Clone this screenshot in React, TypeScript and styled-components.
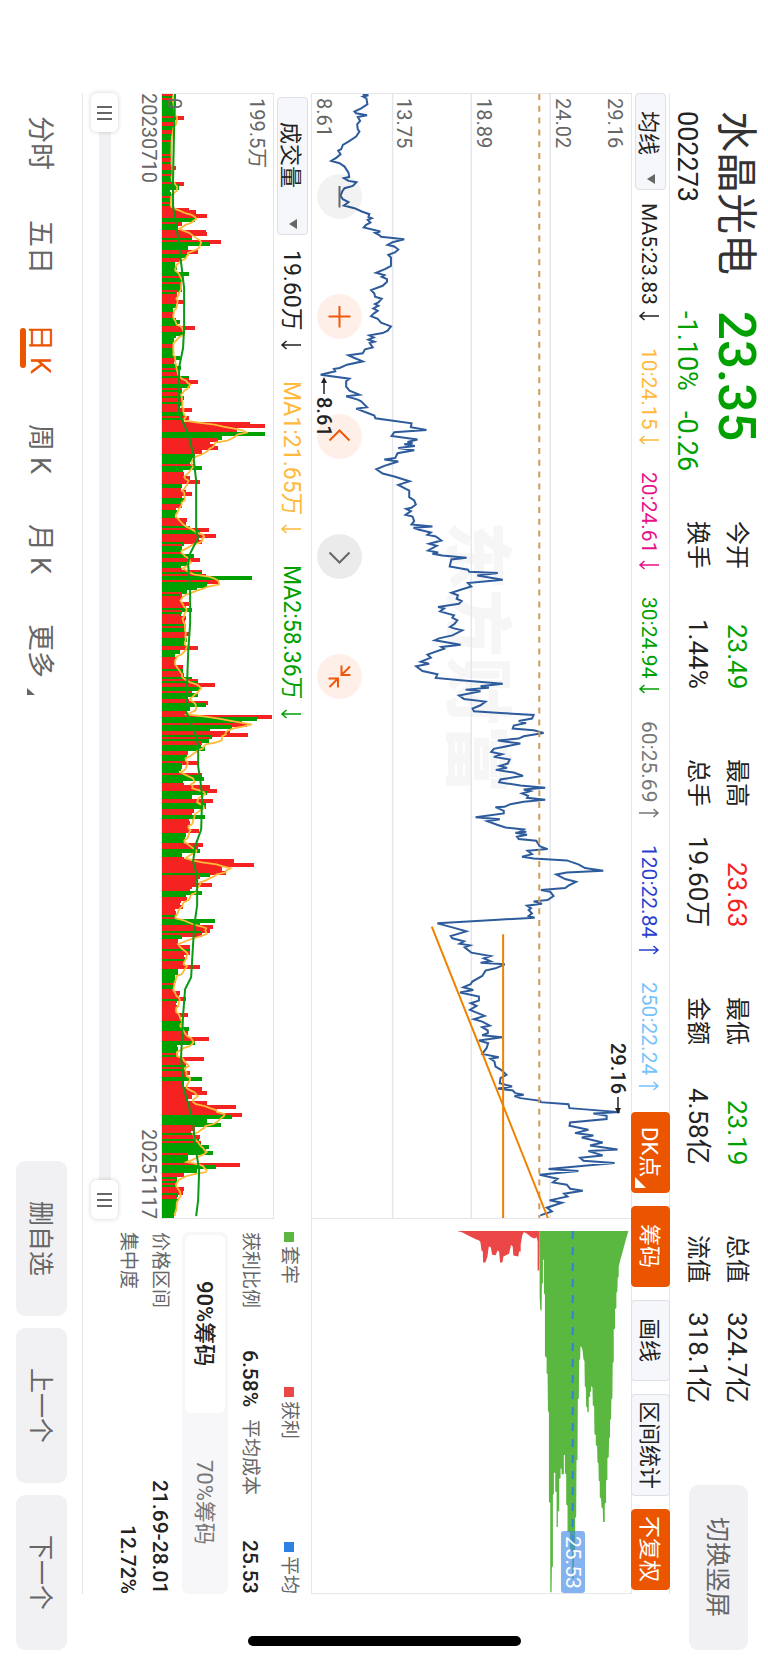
import React, { useState } from "react";
import styled, { createGlobalStyle, css } from "styled-components";

const GlobalStyle = createGlobalStyle`
  * { box-sizing: border-box; }
  html, body { margin: 0; padding: 0; background: #fff; }
  button, select, input {
    font: inherit;
    color: inherit;
    margin: 0;
    padding: 0;
    border: 0;
    background: none;
    writing-mode: vertical-rl;
    text-orientation: sideways;
  }
  dl, dd, dt, p, h1, ul { margin: 0; padding: 0; font-weight: 400; }
`;

const UP = "#f52222";
const DOWN = "#00a000";
const ORANGE = "#eb5500";
const LINE = "#e4e6ec";

/* The trading screen is a landscape one: lines run down the window. */
const Screen = styled.div`
  position: relative;
  display: flex;
  flex-direction: column;
  width: 100%;
  height: 100vh;
  min-height: 1500px;
  padding-inline: 93px 13px;
  writing-mode: vertical-rl;
  text-orientation: sideways;
  background: #fff;
  color: #222;
  font-family: Roboto, "Noto Sans CJK SC", sans-serif;
  font-size: 22px;
  line-height: 24px;
  white-space: nowrap;
`;

/* ---------- header ---------- */

const Header = styled.header`
  display: flex;
  flex: none;
  block-size: 98px;
`;

const Quote = styled.section`
  display: grid;
  grid-template-columns: 200px 210px;
  grid-template-rows: 60px 38px;
  padding-block-start: 2px;
  padding-inline-start: 18px;
`;

const StockName = styled.h1`
  font-size: 41px;
  line-height: 60px;
  color: #333;
`;

const LastPrice = styled.p`
  font-size: 51px;
  font-weight: 500;
  line-height: 60px;
  color: ${DOWN};
`;

const Code = styled.p`
  font-size: 27px;
  line-height: 38px;
`;

const Change = styled(Code)`
  display: flex;
  gap: 20px;
  color: ${DOWN};
`;

const Stats = styled.dl`
  display: grid;
  grid-template-columns: repeat(4, 168px);
  grid-template-rows: 39px 39px;
  grid-auto-flow: column;
  column-gap: 70px;
  padding-block-start: 12px;
`;

const Stat = styled.div`
  display: flex;
  justify-content: space-between;
  font-size: 24px;
  line-height: 39px;
`;

const StatValue = styled.dd<{ $color?: string }>`
  font-size: 26px;
  color: ${(p) => p.$color ?? "inherit"};
`;

const SoftButton = styled.button<{ $length: number; $depth: number }>`
  flex: none;
  inline-size: ${(p) => p.$length}px;
  block-size: ${(p) => p.$depth}px;
  padding-block-start: 3px;
  border-radius: 9px;
  background: #f1f1f4;
  color: #666;
  font-size: 25px;
  text-align: center;
`;

const RotateButton = styled(SoftButton)`
  margin-inline-start: auto;
  margin-block-start: 20px;
`;

/* ---------- indicator bars ---------- */

const Toolbar = styled.div`
  display: flex;
  flex: none;
  align-items: center;
  block-size: 39px;
  margin-inline-end: 56px;
  padding-inline-end: 4px;
  border-block: 1px solid ${LINE};
`;

const PickerBox = styled.label<{ $length: number }>`
  position: relative;
  flex: none;
  inline-size: ${(p) => p.$length}px;
  block-size: 31px;
`;

const PickerSelect = styled.select<{ $pad: number }>`
  appearance: none;
  inline-size: 100%;
  block-size: 100%;
  padding-block-start: 5px;
  padding-inline-start: ${(p) => p.$pad}px;
  border: 1px solid #dcdfe6;
  border-radius: 4px;
  background: #f6f7fa;
  font-size: 22px;
`;

const PickerArrow = styled.svg`
  position: absolute;
  inset-inline-end: 6px;
  inset-block-start: 11px;
  pointer-events: none;
`;

const Averages = styled.ul`
  display: flex;
  flex: 1;
  justify-content: space-between;
  padding-block-start: 3px;
  padding-inline: 13px 21px;
  list-style: none;
  font-size: 21px;
`;

const Average = styled.li<{ $color: string }>`
  display: flex;
  align-items: center;
  gap: 6px;
  color: ${(p) => p.$color};
`;

const Actions = styled.div`
  display: flex;
  gap: 13px;
`;

const Action = styled.button<{ $active?: boolean; $long?: boolean }>`
  position: relative;
  inline-size: ${(p) => (p.$long ? 102 : 81)}px;
  block-size: 39px;
  padding-block-start: 3px;
  border: 1px solid ${(p) => (p.$active ? ORANGE : "#dcdfe6")};
  border-radius: 4px;
  background: ${(p) => (p.$active ? ORANGE : "#f6f7fa")};
  color: ${(p) => (p.$active ? "#fff" : "#222")};
  font-size: 22px;
  text-align: center;
`;

const Corner = styled.svg`
  position: absolute;
  inset-inline-end: 4px;
  inset-block-end: 3px;
`;

/* ---------- charts ---------- */

const Main = styled.main`
  display: flex;
  flex: 1;
  min-block-size: 0;
  margin-inline-end: 56px;
`;

const ChartColumn = styled.section`
  display: flex;
  flex: 1;
  flex-direction: column;
  min-inline-size: 0;
`;

const Panel = styled.div<{ $grow: number }>`
  position: relative;
  flex: ${(p) => p.$grow} 1 0;
  min-block-size: 0;
  border-inline: 1px solid ${LINE};
  border-block-end: 1px solid ${LINE};
`;

const Plot = styled.svg`
  display: block;
  width: 100%;
  height: 100%;
`;

const Watermark = styled.span`
  position: absolute;
  inset-inline-start: 38%;
  inset-block-start: 36%;
  color: #f6f6f6;
  font-size: 68px;
  font-weight: 900;
  line-height: 80px;
`;

const AxisLabel = styled.span<{ $at?: string }>`
  position: absolute;
  inset-inline-start: 4px;
  ${(p) =>
    p.$at
      ? css`
          inset-block-end: ${p.$at};
        `
      : css`
          inset-block-start: 4px;
        `}
  color: #666;
  font-size: 20px;
`;

const Mark = styled.span<{ $start: string; $end: string }>`
  position: absolute;
  inset-inline-start: ${(p) => p.$start};
  inset-block-end: ${(p) => p.$end};
  display: flex;
  align-items: center;
  gap: 3px;
  font-size: 20px;
  font-weight: 500;
`;

const Floating = styled.div`
  position: absolute;
  inset-inline-start: 80px;
  inset-block-end: 5px;
  display: flex;
  gap: 75px;
`;

const RoundButton = styled.button<{ $tone: "dim" | "grey" | "orange" }>`
  inline-size: 45px;
  block-size: 45px;
  border-radius: 50%;
  background: ${(p) =>
    ({
      dim: "rgba(0,0,0,.05)",
      grey: "rgba(0,0,0,.08)",
      orange: "rgba(240,90,0,.09)",
    })[p.$tone]};
  color: ${(p) => (p.$tone === "orange" ? "#f0580a" : "#666")};

  svg {
    display: block;
  }
`;

const VolumeBar = styled.div`
  display: flex;
  flex: none;
  align-items: center;
  gap: 31px;
  block-size: 38px;
  padding-inline-start: 4px;
  border-block-end: 1px solid ${LINE};
  font-size: 23px;
`;

const VolumeItem = styled(Average)`
  gap: 9px;
  padding-block-start: 3px;
  &:first-of-type {
    margin-inline-start: -16px;
  }
`;

const Dates = styled.div`
  display: flex;
  flex: none;
  justify-content: space-between;
  color: #666;
  font-size: 20px;
  line-height: 25px;
`;

const RangeTrack = styled.div`
  position: relative;
  flex: none;
  block-size: 27px;
  margin-block: 18px 8px;
  background: linear-gradient(#f1f1f4, #f1f1f4) center / 12px 100% no-repeat;
`;

const RangeInput = styled.input`
  appearance: none;
  position: absolute;
  inset: 0;
  inline-size: 100%;
  block-size: 100%;
  pointer-events: none;

  &::-webkit-slider-thumb {
    appearance: none;
    width: 27px;
    height: 39px;
    border-radius: 6px;
    pointer-events: auto;
    background:
      linear-gradient(#666, #666) center 13px / 15px 2px no-repeat,
      linear-gradient(#666, #666) center 19px / 15px 2px no-repeat,
      linear-gradient(#666, #666) center 25px / 15px 2px no-repeat,
      #fff;
    box-shadow: 0 0 5px rgba(0, 0, 0, 0.18);
  }
`;

/* ---------- chip distribution ---------- */

const ChipColumn = styled.section`
  display: flex;
  flex: none;
  flex-direction: column;
  inline-size: 375px;
`;

const ChipPanel = styled(Panel)`
  border-inline-start: 0;
`;

const MeanTag = styled.span`
  position: absolute;
  inset-inline-end: 0;
  inset-block-end: 78%;
  padding-inline: 5px 4px;
  border-radius: 3px;
  background: rgba(70, 140, 232, 0.66);
  color: #fff;
  font-size: 21px;
`;

const ChipInfo = styled.div`
  flex: none;
  block-size: 228px;
  padding-block-start: 10px;
  padding-inline-start: 13px;
  color: #666;
  font-size: 19px;
`;

const InfoRow = styled.div<{ $gap: number }>`
  display: flex;
  align-items: center;
  justify-content: space-between;
  column-gap: 12px;
  margin-block-end: ${(p) => p.$gap}px;
`;

const Pair = styled.div`
  display: flex;
  flex: 1;
  align-items: center;
  justify-content: space-between;
`;

const Legend = styled.span<{ $color: string }>`
  display: flex;
  align-items: center;
  gap: 4px;

  &::before {
    content: "";
    inline-size: 10px;
    block-size: 10px;
    background: ${(p) => p.$color};
  }
`;

const Strong = styled.span`
  color: #222;
  font-size: 21px;
  font-weight: 500;
`;

const Segments = styled.div`
  display: flex;
  block-size: 46px;
  margin-block-end: 10px;
  padding: 3px;
  border-radius: 7px;
  background: #f7f7fa;
`;

const Segment = styled.button<{ $on: boolean }>`
  flex: 1;
  padding-block-start: 2px;
  border-radius: 6px;
  background: ${(p) => (p.$on ? "#fff" : "transparent")};
  color: ${(p) => (p.$on ? "#222" : "#777")};
  font-size: 22px;
  font-weight: ${(p) => (p.$on ? 500 : 400)};
  text-align: center;
`;

/* ---------- footer ---------- */

const Footer = styled.footer`
  position: relative;
  display: flex;
  flex: none;
  align-items: center;
  justify-content: space-between;
  block-size: 83px;

  &::before {
    content: "";
    position: absolute;
    inset-block-start: 0;
    inset-inline: 0 56px;
    block-size: 1px;
    background: ${LINE};
  }
`;

const Periods = styled.nav`
  display: flex;
  gap: 50px;
  padding-block-start: 3px;
  padding-inline-start: 23px;
`;

const Period = styled.button<{ $on?: boolean }>`
  position: relative;
  display: flex;
  align-items: center;
  gap: 6px;
  color: ${(p) => (p.$on ? ORANGE : "#666")};
  font-size: 27px;
  line-height: 38px;

  &::after {
    content: "";
    display: ${(p) => (p.$on ? "block" : "none")};
    position: absolute;
    inset-inline-start: 4px;
    inset-block-end: -1px;
    inline-size: 40px;
    block-size: 6px;
    border-radius: 3px;
    background: ${ORANGE};
  }
`;

const MoreMark = styled.svg`
  position: absolute;
  inset-inline-end: -17px;
  inset-block-end: 6px;
`;

const Pager = styled.div`
  display: flex;
  gap: 12px;
`;

const HomeBar = styled.div`
  position: absolute;
  inset-inline-end: 17px;
  inset-block: 247px 248px;
  inline-size: 10px;
  border-radius: 5px;
  background: #000;
`;

/* ---------- data ---------- */

type Run = { start: number; points: string };

const PRICE_RUNS: Run[] = [
  {
    start: -39,
    points:
      "305 40,322 43,306 47,316 52,319 70,300 82,280 92,285 97,318 103,290 108,297 120,288 130,290 145,295 152,285 167,262 182,245 192,240 205,231 209,238 220,226 230,210 240,235 247,250 257,262 275,264 288,248 292,262 300,286 304,275 315,250 322,243 332,238 345,245 355,262 364,248 374,280 382,302 392,325 400,322 408,332 412,320 417,328 425,315 432,308 440,358 452,342 456,355 463,360 468,430 475,395 484,380 492,400 497,412 506,402 515,382 522,390 530,390 555,372 565,345 576,370 583,362 588,378 595,378 603,365 615,330 628,340 638,342 648,362 654,352 665,342 670,352 675,337 683,350 690,340 697,330 706,350 714,360 726,390 737,380 750,365 757,325 764,338 770,322 777,340 783,326 787,335 800,312 806,305 818,262 824,280 832,305 842,258 852,235 862,218 865,222 872,178 882,265 894,255 902,255 918,265 930,295 942,255 947,290 957,300 962,318 980,285 984,320 997,340 1005,343 1013,452 1028,450 1040,497 1048,400 1055,392 1066",
  },
  {
    start: 921,
    points:
      "470 117,440 124,455 128,430 131,462 136,412 142,460 149,410 158,403 172,370 177,412 183,370 196,346 206,365 219,400 228,446 242,412 253,445 270,445 290,460 300,465 312,452 322,436 325,450 332,434 343,455 348,460 362,452 372,515 378,458 382,475 388,510 396,500 403,525 408,542 420,505 430,528 436,502 450,532 456,515 460,545 465,618 472,572 477,567 498,622 508,626 514,712 518,650 525,727 538,622 548,632 558,600 568,572 577,592 585,588 595,603 602,595 610,532 620,550 624,538 633,580 645,575 652,590 660,582 670,568 680,580 684,605 690,575 705,535 714,522 720,600 733,542 740,550 745,500 763,510 772,480 784,505 790,466 798,485 812,530 822,525 833,600 840,727 850,660 858,685 862,615 868,660 873,595 886,610 896,675 904,660 915,636 925,640 933,720 938,820 944,815 955,775 962,797 968,760 976,757 985,820 990,850 998,790 1008,775 1015,712 1021,780 1030,700 1046,692 1055,725 1062,700 1070,748 1078,742 1090,718 1097,740 1103,706 1109,760 1117,788 1127,720 1138,716 1146,780 1156,855 1163,790 1168,810 1173,785 1180,803 1187,800 1193,855 1199",
  },
  {
    start: 2121,
    points:
      "790 5,750 12,732 20,705 21,730 32,730 40,645 51,718 57,680 63,710 74,735 82,790 88,780 94,798 95,765 98,800 104,770 110,775 117,828 122,838 138,862 147,802 152,815 162,785 170,820 175,920 181,955 193,975 204,1030 212,920 217,888 223,915 237,948 245,925 257,915 264,842 270,870 275,880 288,862 300,820 304,845 311,800 317,812 325,805 330,815 340,805 348,823 353,700 360,530 370,575 382,617 394,570 408,575 415,610 424,597 431,628 436,612 442,632 458,690 468,670 475,690 484,660 488,733 493,705 505,675 512,665 528,635 545,630 553,608 562,638 570,598 578,655 590,655 602,630 610,648 618,628 630,672 648,640 658,665 665,688 677,665 682,682 692,682 700,665 706,725 712,655 722,683 730,678 745,665 762,715 772,690 777,702 785,705 800,722 810,738 825,720 835,718 850,755 860,712 866,757 872,765 880,790 885,762 889,780 895,840 903,840 907,925 913,928 925,1080 937,1000 941,1040 948,1040 958,930 968,928 978,985 990,945 1000,1000 1007,965 1013,1028 1028,990 1037,1073 1049,985 1054,1028 1067,960 1074,970 1083,1064 1090,865 1108,955 1114,838 1125,892 1137,878 1148,920 1155,930 1167,968 1173,912 1182,922 1190,868 1202,905 1209,860 1224,875 1235,840 1247",
  },
];

const pricePath = PRICE_RUNS.flatMap(({ start, points }) =>
  points.split(",").map((pair) => {
    const [value, time] = pair.split(" ").map(Number);
    return `${value},${time + start}`;
  })
).join(" ");

/* time, height and direction of the trading days that stand out */
const VOLUME_PEAKS =
  "0 11 r,8 14 g,20 14 g,22 22 r,25 13 g,28 12 r,32 12 g,36 11 r,40 10 g,57 10 g,60 10 r,68 10 g,73 14 r,78 10 g,86 11 g,89 22 r,93 17 g,100 10 g,108 9 r,113 12 r,115 27 r,117 34 r,121 45 r,125 33 g,128 20 r,132 16 g,136 44 r,139 45 r,142 30 r,146 59 r,149 48 g,152 26 g,156 36 r,160 25 g,164 18 r,168 13 g,172 15 g,178 27 g,182 20 r,186 20 g,195 20 g,200 15 r,206 22 r,210 14 g,218 12 r,224 14 g,227 18 g,233 33 r,238 22 g,241 14 g,250 12 r,256 12 g,262 18 g,264 14 r,272 19 g,278 16 r,282 27 g,286 36 r,290 28 g,295 20 r,303 22 g,306 21 r,314 30 r,318 22 g,322 27 r,326 22 r,328 88 r,331 103 r,334 75 r,339 103 g,342 60 g,345 56 r,350 52 r,353 56 r,357 40 r,361 33 g,365 30 g,370 32 r,373 40 g,378 22 r,382 28 r,387 38 r,391 20 g,396 24 r,399 30 r,404 22 g,410 20 r,416 15 g,424 25 r,428 24 r,432 28 g,434 47 r,436 38 g,440 54 r,446 40 r,449 22 g,454 20 g,461 32 g,465 38 r,469 25 g,474 20 r,477 40 r,481 44 r,483 90 g,486 57 r,490 45 g,492 35 g,496 25 g,503 20 r,508 27 r,515 30 g,517 20 r,522 24 r,530 24 g,538 27 r,545 25 g,552 36 r,557 18 g,564 14 r,572 21 r,581 22 r,585 30 g,587 36 r,591 53 r,594 38 g,598 30 r,601 36 g,606 27 r,609 46 r,611 44 g,614 28 g,619 25 r,623 110 r,625 95 g,628 80 g,630 85 r,632 70 g,636 48 g,638 68 r,640 86 r,643 50 g,646 47 g,649 40 r,654 43 g,658 26 r,663 25 g,668 36 r,673 20 g,680 40 r,685 42 g,690 22 r,693 48 r,696 55 r,698 45 g,703 30 g,707 51 r,713 44 g,717 32 r,722 43 g,728 28 r,736 37 r,741 24 g,750 41 r,757 38 g,764 22 r,767 72 r,770 92 r,774 60 r,778 64 r,780 48 g,783 38 r,790 50 r,792 30 r,798 40 g,804 25 r,812 21 r,818 14 r,824 14 r,827 53 g,830 38 g,833 51 r,836 48 r,840 40 r,843 20 g,848 16 r,853 28 r,858 28 r,865 23 r,873 38 r,878 16 g,886 14 g,892 12 g,898 18 r,904 24 r,913 15 r,921 26 r,928 20 g,935 27 g,938 26 r,945 47 r,948 33 g,955 16 g,965 42 r,970 24 r,979 28 r,985 40 g,989 22 r,995 40 r,998 45 r,1003 30 r,1008 45 r,1012 74 r,1016 55 r,1020 80 r,1022 70 g,1026 45 g,1030 59 g,1035 33 r,1043 38 r,1048 39 r,1053 47 g,1059 51 g,1064 26 g,1071 78 r,1073 54 g,1077 35 g,1081 22 r,1088 15 g,1094 22 r,1098 21 r,1106 16 g,1115 15 g,1124 13 g";

const peaks = VOLUME_PEAKS.split(",").map((entry) => {
  const [time, height, side] = entry.split(" ");
  return { time: Number(time), height: Number(height), up: side === "r" };
});

/* Neighbouring bars overlap: each is drawn wider than one step. */
const STEP = 2;
const BAR_WIDTH = 4;

const volumeBars = Array.from({ length: 562 }, (_, i) => {
  const time = i * STEP;
  const noise = ((i * 7919 + i * i * 31) % 97) / 97;
  const exact = peaks.find((p) => p.time === time || p.time === time + 1);
  if (exact) return { time, height: exact.height, up: exact.up };
  const after = Math.max(1, peaks.findIndex((p) => p.time > time));
  const a = peaks[after - 1];
  const b = peaks[after];
  return {
    time,
    height: Math.min(a.height, b.height) * (0.84 + noise * 0.16),
    up: noise > 0.76 ? !a.up : a.up,
  };
});

const shortAverage = volumeBars
  .map((bar, i) => {
    const window = volumeBars.slice(Math.max(0, i - 4), i + 1);
    const mean = window.reduce((sum, b) => sum + b.height, 0) / window.length;
    return `${mean.toFixed(1)},${bar.time + 1}`;
  })
  .join(" ");

const LONG_AVERAGE =
  "13,0 12,37 11,87 11,112 15,137 18,160 20,177 22,194 22,234 21,254 17,274 17,320 26,340 31,360 34,387 34,437 36,444 28,460 26,470 27,484 28,492 28,530 26,560 24,618 33,640 36,652 36,673 38,686 40,703 39,736 33,753 31,768 35,783 35,812 32,833 29,884 23,896 21,922 19,964 21,993 27,1014 31,1031 33,1052 37,1077 36,1107 34,1123";

const CHIP_LOSS =
  "837,153 837,350 839,392 843,392 844,312 847,310 847,240 850,240 850,340 853,345 853,530 858,535 858,582 861,584 862,695 865,700 865,970 869,972 869,1242 873,1242 874,1165 877,1165 877,948 880,945 880,882 884,882 884,938 888,940 888,1045 892,1045 892,998 896,998 896,900 900,898 900,868 903,870 903,886 910,886 910,828 913,828 913,883 917,886 917,978 921,980 921,1060 928,1060 928,1110 935,1120 935,1200 940,1200 940,1150 944,1110 944,1017 947,1015 948,845 951,842 952,660 955,658 956,543 959,540 960,500 964,505 966,512 969,540 972,545 973,620 976,625 977,682 980,685 981,700 985,698 985,655 989,652 989,638 992,636 992,620 996,625 997,678 1001,682 1002,765 1006,768 1006,798 1010,802 1011,850 1014,853 1015,905 1018,908 1018,955 1022,960 1023,985 1027,990 1028,1030 1033,1030 1033,975 1037,972 1037,905 1041,903 1041,838 1045,835 1046,778 1049,775 1049,723 1052,720 1053,660 1056,657 1057,550 1060,548 1060,450 1064,447 1064,388 1068,385 1068,340 1071,335 1072,295 1075,290 1075,262 1080,240 1087,215 1095,185 1104,153";

const CHIP_GAIN =
  "589,153 605,158 625,168 645,178 655,182 659,188 662,212 666,215 667,248 674,248 680,230 684,200 690,202 694,225 705,226 710,212 715,215 718,248 725,248 728,230 745,222 751,195 756,200 758,227 773,230 775,215 780,215 780,195 785,165 790,156 800,162 812,172 822,176 828,172 831,185 831,272 836,272 837,153";

const STATS: [string, string, string?][] = [
  ["今开", "23.49", DOWN],
  ["换手", "1.44%"],
  ["最高", "23.63", UP],
  ["总手", "19.60万"],
  ["最低", "23.19", DOWN],
  ["金额", "4.58亿"],
  ["总值", "324.7亿"],
  ["流值", "318.1亿"],
];

const AVERAGES: [string, string, boolean][] = [
  ["MA5:23.83", "#222", false],
  ["10:24.15", "#ffb93b", false],
  ["20:24.61", "#e6118a", false],
  ["30:24.94", DOWN, false],
  ["60:25.69", "#777", true],
  ["120:22.84", "#2a3fd0", true],
  ["250:22.24", "#76c2fb", true],
];

/* ---------- parts ---------- */

const Trend = ({ up }: { up?: boolean }) => (
  <svg width="22" height="10" viewBox="0 0 22 10" fill="none" stroke="currentColor" strokeWidth="1.5">
    <path d={up ? "M1 5H20M15.5 1L20 5L15.5 9" : "M21 5H2M6.500 1L2 5L6.500 9"} />
  </svg>
);

const Picker = ({ label, option, length, pad }: { label: string; option: string; length: number; pad: number }) => (
  <PickerBox $length={length}>
    <PickerSelect $pad={pad} aria-label={label}>
      <option>{option}</option>
    </PickerSelect>
    <PickerArrow width="8" height="10" viewBox="0 0 8 10">
      <path d="M8 0V10L0 5Z" fill="#666" />
    </PickerArrow>
  </PickerBox>
);

const Pointer = ({ back }: { back?: boolean }) => (
  <svg width="8" height="17" viewBox="0 0 8 17" stroke="#222" strokeWidth="1.5">
    <path d={back ? "M4 2V17" : "M4 0V15"} />
    <path d={back ? "M4 0L7 6H1Z" : "M4 17L7 11H1Z"} fill="#222" stroke="none" />
  </svg>
);

const TOOLS: { name: string; tone: "dim" | "grey" | "orange"; d: string }[] = [
  { name: "缩小", tone: "dim", d: "M22.500 12V33.500" },
  { name: "放大", tone: "orange", d: "M22.500 12V33.500M11.500 22.500H33.500" },
  { name: "左移", tone: "orange", d: "M12.500 26.500L22.500 16.500L32.500 26.500" },
  { name: "右移", tone: "grey", d: "M12.500 18.500L22.500 28.500L32.500 18.500" },
  {
    name: "收起",
    tone: "orange",
    d: "M24.500 11.500V21H33.500M33 12.500L24.500 21M11.500 24.500H21V33.500M12.500 33L21 24.500",
  },
];

const fixedStroke = { vectorEffect: "non-scaling-stroke" } as const;

const PricePlot = styled(Plot)`
  position: relative;
`;

const PriceChart = () => (
  <Panel $grow={320}>
    <Watermark>东方财富</Watermark>
    <PricePlot viewBox="152 0 960 3376" preserveAspectRatio="none">
      <g stroke={LINE} strokeWidth="1.500">
        <path d="M395 0V3376M632 0V3376M870 0V3376" {...fixedStroke} />
      </g>
      <polyline points={pricePath} fill="none" stroke="#2d5b9c" strokeWidth="2" {...fixedStroke} />
      <path d="M837 0V3376" stroke="#d49a58" strokeWidth="2" strokeDasharray="6 5.8" {...fixedStroke} />
      <path d="M728 2524V3376M513 2501L863 3376" stroke="#ef8200" strokeWidth="2" {...fixedStroke} />
    </PricePlot>
    <AxisLabel $at="0%">8.61</AxisLabel>
    <AxisLabel $at="25%">13.75</AxisLabel>
    <AxisLabel $at="50%">18.89</AxisLabel>
    <AxisLabel $at="75%">24.02</AxisLabel>
    <AxisLabel>29.16</AxisLabel>
    <Floating>
      {TOOLS.map((tool) => (
        <RoundButton key={tool.name} $tone={tool.tone} aria-label={tool.name}>
          <svg width="45" height="45" viewBox="0 0 45 45" fill="none" stroke="currentColor" strokeWidth="2">
            <path d={tool.d} />
          </svg>
        </RoundButton>
      ))}
    </Floating>
    <Mark $start="25.2%" $end="0%">
      <Pointer back />
      8.61
    </Mark>
    <Mark $start="84.400%" $end="92%">
      29.16
      <Pointer />
    </Mark>
  </Panel>
);

const VolumeChart = () => (
  <Panel $grow={112}>
    <Plot viewBox="0 0 111 1125" preserveAspectRatio="none">
      {volumeBars.map((bar) => (
        <rect
          key={bar.time}
          x="0"
          y={bar.time}
          width={bar.height}
          height={BAR_WIDTH}
          fill={bar.up ? UP : DOWN}
          shapeRendering="crispEdges"
        />
      ))}
      <polyline points={shortAverage} fill="none" stroke="#ffb938" strokeWidth="1.8" {...fixedStroke} />
      <polyline points={LONG_AVERAGE} fill="none" stroke="#0a9a14" strokeWidth="2" {...fixedStroke} />
    </Plot>
    <AxisLabel>199.5万</AxisLabel>
    <AxisLabel $at="0%">0</AxisLabel>
  </Panel>
);

const ChipChart = () => (
  <ChipPanel $grow={320}>
    <Plot viewBox="152 117 960 1127" preserveAspectRatio="none">
      <polygon points={CHIP_LOSS} fill="#5ab840" />
      <polygon points={CHIP_GAIN} fill="#eb4747" />
      <path d="M936.500 153V1100" stroke="#2f80e4" strokeWidth="2" strokeDasharray="8 8" {...fixedStroke} />
    </Plot>
    <MeanTag>25.53</MeanTag>
  </ChipPanel>
);

export default function App() {
  const [chips, setChips] = useState("90%筹码");
  const [from, setFrom] = useState(0);
  const [to, setTo] = useState(100);

  return (
    <>
      <GlobalStyle />
      <Screen>
        <Header>
          <Quote>
            <StockName>水晶光电</StockName>
            <LastPrice>23.35</LastPrice>
            <Code>002273</Code>
            <Change>
              <span>-1.10%</span>
              <span>-0.26</span>
            </Change>
          </Quote>
          <Stats>
            {STATS.map(([name, value, color]) => (
              <Stat key={name}>
                <dt>{name}</dt>
                <StatValue $color={color}>{value}</StatValue>
              </Stat>
            ))}
          </Stats>
          <RotateButton $length={165} $depth={59}>
            切换竖屏
          </RotateButton>
        </Header>

        <Toolbar>
          <Picker label="主图指标" option="均线" length={97} pad={17} />
          <Averages>
            {AVERAGES.map(([text, color, up]) => (
              <Average key={text} $color={color}>
                {text}
                <Trend up={up} />
              </Average>
            ))}
          </Averages>
          <Actions>
            <Action $active>
              DK点
              <Corner width="11" height="11" viewBox="0 0 11 11">
                <path d="M0 0V11H11Z" fill="#fff" />
              </Corner>
            </Action>
            <Action $active>筹码</Action>
            <Action>画线</Action>
            <Action $long>区间统计</Action>
            <Action $active>不复权</Action>
          </Actions>
        </Toolbar>

        <Main>
          <ChartColumn>
            <PriceChart />
            <VolumeBar>
              <Picker label="副图指标" option="成交量" length={138} pad={24} />
              <VolumeItem as="div" $color="#222">
                19.60万
                <Trend />
              </VolumeItem>
              <VolumeItem as="div" $color="#ffb93b">
                MA1:21.65万
                <Trend />
              </VolumeItem>
              <VolumeItem as="div" $color={DOWN}>
                MA2:58.36万
                <Trend />
              </VolumeItem>
            </VolumeBar>
            <VolumeChart />
            <Dates>
              <time dateTime="2023-07-10">20230710</time>
              <time dateTime="2025-11-17">20251117</time>
            </Dates>
            <RangeTrack>
              <RangeInput
                type="range"
                aria-label="起始日期"
                value={from}
                onChange={(e) => setFrom(Math.min(Number(e.target.value), to))}
              />
              <RangeInput
                type="range"
                aria-label="结束日期"
                value={to}
                onChange={(e) => setTo(Math.max(Number(e.target.value), from))}
              />
            </RangeTrack>
          </ChartColumn>

          <ChipColumn>
            <ChipChart />
            <ChipInfo>
              <InfoRow $gap={15}>
                <Legend $color="#5ab840">套牢</Legend>
                <Legend $color="#eb4747">获利</Legend>
                <Legend $color="#2f80e4">平均</Legend>
              </InfoRow>
              <InfoRow $gap={10}>
                <Pair>
                  <span>获利比例</span>
                  <Strong>6.58%</Strong>
                </Pair>
                <Pair>
                  <span>平均成本</span>
                  <Strong>25.53</Strong>
                </Pair>
              </InfoRow>
              <Segments>
                {["90%筹码", "70%筹码"].map((name) => (
                  <Segment key={name} $on={name === chips} onClick={() => setChips(name)}>
                    {name}
                  </Segment>
                ))}
              </Segments>
              <InfoRow $gap={8}>
                <span>价格区间</span>
                <Strong>21.69-28.01</Strong>
              </InfoRow>
              <InfoRow $gap={0}>
                <span>集中度</span>
                <Strong>12.72%</Strong>
              </InfoRow>
            </ChipInfo>
          </ChipColumn>
        </Main>

        <Footer>
          <Periods>
            <Period>分时</Period>
            <Period>五日</Period>
            <Period $on>
              <span>日</span>
              <span>K</span>
            </Period>
            <Period>
              <span>周</span>
              <span>K</span>
            </Period>
            <Period>
              <span>月</span>
              <span>K</span>
            </Period>
            <Period>
              更多
              <MoreMark width="8" height="7" viewBox="0 0 8 7">
                <path d="M0 0V7H8Z" fill="#666" />
              </MoreMark>
            </Period>
          </Periods>
          <Pager>
            <SoftButton $length={155} $depth={51}>
              删自选
            </SoftButton>
            <SoftButton $length={155} $depth={51}>
              上一个
            </SoftButton>
            <SoftButton $length={155} $depth={51}>
              下一个
            </SoftButton>
          </Pager>
        </Footer>
        <HomeBar />
      </Screen>
    </>
  );
}
